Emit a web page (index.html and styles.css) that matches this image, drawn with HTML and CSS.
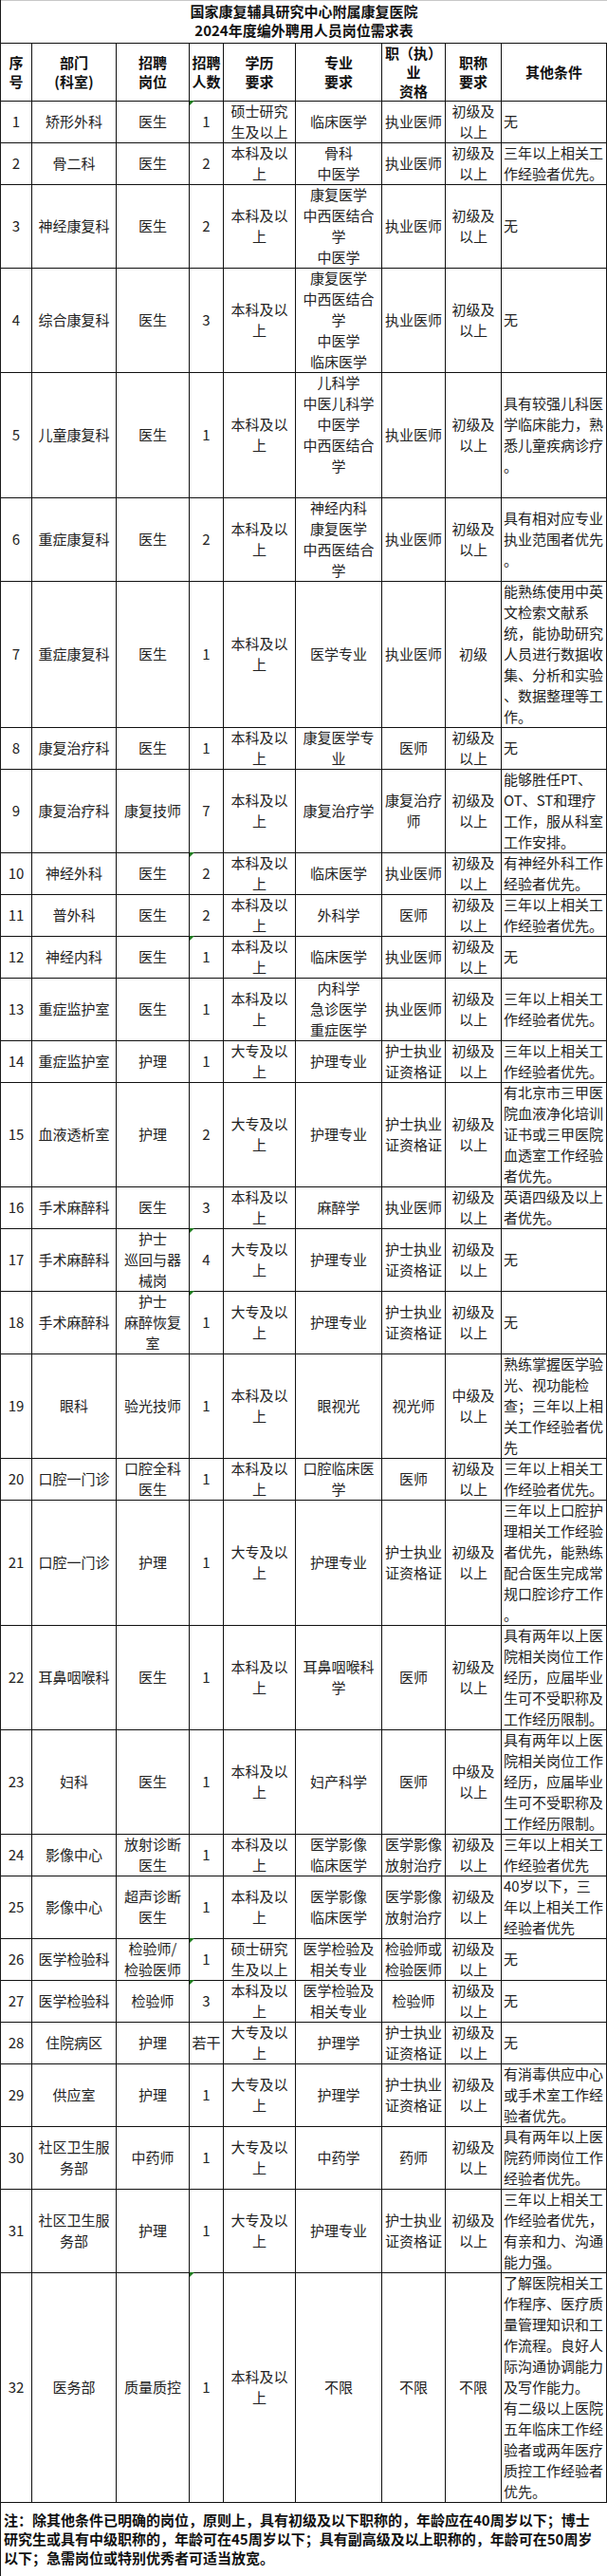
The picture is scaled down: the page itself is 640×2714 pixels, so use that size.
FILE: index.html
```html
<!DOCTYPE html>
<html lang="zh-CN">
<head>
<meta charset="utf-8">
<title>2024年度编外聘用人员岗位需求表</title>
<link rel="stylesheet" href="styles.css">
</head>
<body>
<div class="sheet">
  <div class="title">国家康复辅具研究中心附属康复医院<br>2024年度编外聘用人员岗位需求表</div>

  <div class="row head">
    <div class="c"><span>序<br>号</span></div>
    <div class="c"><span>部门<br>(科室)</span></div>
    <div class="c"><span>招聘<br>岗位</span></div>
    <div class="c"><span>招聘<br>人数</span></div>
    <div class="c"><span>学历<br>要求</span></div>
    <div class="c"><span>专业<br>要求</span></div>
    <div class="c"><span>职（执）<br>业<br>资格</span></div>
    <div class="c"><span>职称<br>要求</span></div>
    <div class="c"><span>其他条件</span></div>
  </div>

  <div class="row r2">
    <div class="c"><span>1</span></div>
    <div class="c"><span>矫形外科</span></div>
    <div class="c"><span>医生</span></div>
    <div class="c tri"><span>1</span></div>
    <div class="c"><span>硕士研究<br>生及以上</span></div>
    <div class="c"><span>临床医学</span></div>
    <div class="c"><span>执业医师</span></div>
    <div class="c"><span>初级及<br>以上</span></div>
    <div class="c o"><span>无</span></div>
  </div>

  <div class="row r2">
    <div class="c"><span>2</span></div>
    <div class="c"><span>骨二科</span></div>
    <div class="c"><span>医生</span></div>
    <div class="c"><span>2</span></div>
    <div class="c"><span>本科及以<br>上</span></div>
    <div class="c"><span>骨科<br>中医学</span></div>
    <div class="c"><span>执业医师</span></div>
    <div class="c"><span>初级及<br>以上</span></div>
    <div class="c o"><span>三年以上相关工<br>作经验者优先。</span></div>
  </div>

  <div class="row r4">
    <div class="c"><span>3</span></div>
    <div class="c"><span>神经康复科</span></div>
    <div class="c"><span>医生</span></div>
    <div class="c"><span>2</span></div>
    <div class="c"><span>本科及以<br>上</span></div>
    <div class="c"><span>康复医学<br>中西医结合<br>学<br>中医学</span></div>
    <div class="c"><span>执业医师</span></div>
    <div class="c"><span>初级及<br>以上</span></div>
    <div class="c o"><span>无</span></div>
  </div>

  <div class="row r5">
    <div class="c"><span>4</span></div>
    <div class="c"><span>综合康复科</span></div>
    <div class="c"><span>医生</span></div>
    <div class="c"><span>3</span></div>
    <div class="c"><span>本科及以<br>上</span></div>
    <div class="c"><span>康复医学<br>中西医结合<br>学<br>中医学<br>临床医学</span></div>
    <div class="c"><span>执业医师</span></div>
    <div class="c"><span>初级及<br>以上</span></div>
    <div class="c o"><span>无</span></div>
  </div>

  <div class="row r6">
    <div class="c"><span>5</span></div>
    <div class="c"><span>儿童康复科</span></div>
    <div class="c"><span>医生</span></div>
    <div class="c"><span>1</span></div>
    <div class="c"><span>本科及以<br>上</span></div>
    <div class="c"><span>儿科学<br>中医儿科学<br>中医学<br>中西医结合<br>学<br>&nbsp;</span></div>
    <div class="c"><span>执业医师</span></div>
    <div class="c"><span>初级及<br>以上</span></div>
    <div class="c o"><span>具有较强儿科医<br>学临床能力，熟<br>悉儿童疾病诊疗<br>。</span></div>
  </div>

  <div class="row r4">
    <div class="c"><span>6</span></div>
    <div class="c"><span>重症康复科</span></div>
    <div class="c"><span>医生</span></div>
    <div class="c"><span>2</span></div>
    <div class="c"><span>本科及以<br>上</span></div>
    <div class="c"><span>神经内科<br>康复医学<br>中西医结合<br>学</span></div>
    <div class="c"><span>执业医师</span></div>
    <div class="c"><span>初级及<br>以上</span></div>
    <div class="c o"><span>具有相对应专业<br>执业范围者优先<br>。</span></div>
  </div>

  <div class="row r7">
    <div class="c"><span>7</span></div>
    <div class="c"><span>重症康复科</span></div>
    <div class="c"><span>医生</span></div>
    <div class="c"><span>1</span></div>
    <div class="c"><span>本科及以<br>上</span></div>
    <div class="c"><span>医学专业</span></div>
    <div class="c"><span>执业医师</span></div>
    <div class="c"><span>初级</span></div>
    <div class="c o"><span>能熟练使用中英<br>文检索文献系<br>统，能协助研究<br>人员进行数据收<br>集、分析和实验<br>、数据整理等工<br>作。</span></div>
  </div>

  <div class="row r2">
    <div class="c"><span>8</span></div>
    <div class="c"><span>康复治疗科</span></div>
    <div class="c"><span>医生</span></div>
    <div class="c"><span>1</span></div>
    <div class="c"><span>本科及以<br>上</span></div>
    <div class="c"><span>康复医学专<br>业</span></div>
    <div class="c"><span>医师</span></div>
    <div class="c"><span>初级及<br>以上</span></div>
    <div class="c o"><span>无</span></div>
  </div>

  <div class="row r4">
    <div class="c"><span>9</span></div>
    <div class="c"><span>康复治疗科</span></div>
    <div class="c"><span>康复技师</span></div>
    <div class="c"><span>7</span></div>
    <div class="c"><span>本科及以<br>上</span></div>
    <div class="c"><span>康复治疗学</span></div>
    <div class="c"><span>康复治疗<br>师</span></div>
    <div class="c"><span>初级及<br>以上</span></div>
    <div class="c o"><span>能够胜任PT、<br>OT、ST和理疗<br>工作，服从科室<br>工作安排。</span></div>
  </div>

  <div class="row r2">
    <div class="c"><span>10</span></div>
    <div class="c"><span>神经外科</span></div>
    <div class="c"><span>医生</span></div>
    <div class="c tri"><span>2</span></div>
    <div class="c"><span>本科及以<br>上</span></div>
    <div class="c"><span>临床医学</span></div>
    <div class="c"><span>执业医师</span></div>
    <div class="c"><span>初级及<br>以上</span></div>
    <div class="c o"><span>有神经外科工作<br>经验者优先。</span></div>
  </div>

  <div class="row r2">
    <div class="c"><span>11</span></div>
    <div class="c"><span>普外科</span></div>
    <div class="c"><span>医生</span></div>
    <div class="c"><span>2</span></div>
    <div class="c"><span>本科及以<br>上</span></div>
    <div class="c"><span>外科学</span></div>
    <div class="c"><span>医师</span></div>
    <div class="c"><span>初级及<br>以上</span></div>
    <div class="c o"><span>三年以上相关工<br>作经验者优先。</span></div>
  </div>

  <div class="row r2">
    <div class="c"><span>12</span></div>
    <div class="c"><span>神经内科</span></div>
    <div class="c"><span>医生</span></div>
    <div class="c tri"><span>1</span></div>
    <div class="c"><span>本科及以<br>上</span></div>
    <div class="c"><span>临床医学</span></div>
    <div class="c"><span>执业医师</span></div>
    <div class="c"><span>初级及<br>以上</span></div>
    <div class="c o"><span>无</span></div>
  </div>

  <div class="row r3">
    <div class="c"><span>13</span></div>
    <div class="c"><span>重症监护室</span></div>
    <div class="c"><span>医生</span></div>
    <div class="c"><span>1</span></div>
    <div class="c"><span>本科及以<br>上</span></div>
    <div class="c"><span>内科学<br>急诊医学<br>重症医学</span></div>
    <div class="c"><span>执业医师</span></div>
    <div class="c"><span>初级及<br>以上</span></div>
    <div class="c o"><span>三年以上相关工<br>作经验者优先。</span></div>
  </div>

  <div class="row r2">
    <div class="c"><span>14</span></div>
    <div class="c"><span>重症监护室</span></div>
    <div class="c"><span>护理</span></div>
    <div class="c"><span>1</span></div>
    <div class="c"><span>大专及以<br>上</span></div>
    <div class="c"><span>护理专业</span></div>
    <div class="c"><span>护士执业<br>证资格证</span></div>
    <div class="c"><span>初级及<br>以上</span></div>
    <div class="c o"><span>三年以上相关工<br>作经验者优先。</span></div>
  </div>

  <div class="row r5">
    <div class="c"><span>15</span></div>
    <div class="c"><span>血液透析室</span></div>
    <div class="c"><span>护理</span></div>
    <div class="c"><span>2</span></div>
    <div class="c"><span>大专及以<br>上</span></div>
    <div class="c"><span>护理专业</span></div>
    <div class="c"><span>护士执业<br>证资格证</span></div>
    <div class="c"><span>初级及<br>以上</span></div>
    <div class="c o"><span>有北京市三甲医<br>院血液净化培训<br>证书或三甲医院<br>血透室工作经验<br>者优先。</span></div>
  </div>

  <div class="row r2">
    <div class="c"><span>16</span></div>
    <div class="c"><span>手术麻醉科</span></div>
    <div class="c"><span>医生</span></div>
    <div class="c"><span>3</span></div>
    <div class="c"><span>本科及以<br>上</span></div>
    <div class="c"><span>麻醉学</span></div>
    <div class="c"><span>执业医师</span></div>
    <div class="c"><span>初级及<br>以上</span></div>
    <div class="c o"><span>英语四级及以上<br>者优先。</span></div>
  </div>

  <div class="row r3">
    <div class="c"><span>17</span></div>
    <div class="c"><span>手术麻醉科</span></div>
    <div class="c"><span>护士<br>巡回与器<br>械岗</span></div>
    <div class="c tri"><span>4</span></div>
    <div class="c"><span>大专及以<br>上</span></div>
    <div class="c"><span>护理专业</span></div>
    <div class="c"><span>护士执业<br>证资格证</span></div>
    <div class="c"><span>初级及<br>以上</span></div>
    <div class="c o"><span>无</span></div>
  </div>

  <div class="row r3">
    <div class="c"><span>18</span></div>
    <div class="c"><span>手术麻醉科</span></div>
    <div class="c"><span>护士<br>麻醉恢复<br>室</span></div>
    <div class="c tri"><span>1</span></div>
    <div class="c"><span>大专及以<br>上</span></div>
    <div class="c"><span>护理专业</span></div>
    <div class="c"><span>护士执业<br>证资格证</span></div>
    <div class="c"><span>初级及<br>以上</span></div>
    <div class="c o"><span>无</span></div>
  </div>

  <div class="row r5">
    <div class="c"><span>19</span></div>
    <div class="c"><span>眼科</span></div>
    <div class="c"><span>验光技师</span></div>
    <div class="c"><span>1</span></div>
    <div class="c"><span>本科及以<br>上</span></div>
    <div class="c"><span>眼视光</span></div>
    <div class="c"><span>视光师</span></div>
    <div class="c"><span>中级及<br>以上</span></div>
    <div class="c o"><span>熟练掌握医学验<br>光、视功能检<br>查；三年以上相<br>关工作经验者优<br>先</span></div>
  </div>

  <div class="row r2">
    <div class="c"><span>20</span></div>
    <div class="c"><span>口腔一门诊</span></div>
    <div class="c"><span>口腔全科<br>医生</span></div>
    <div class="c"><span>1</span></div>
    <div class="c"><span>本科及以<br>上</span></div>
    <div class="c"><span>口腔临床医<br>学</span></div>
    <div class="c"><span>医师</span></div>
    <div class="c"><span>初级及<br>以上</span></div>
    <div class="c o"><span>三年以上相关工<br>作经验者优先。</span></div>
  </div>

  <div class="row r6">
    <div class="c"><span>21</span></div>
    <div class="c"><span>口腔一门诊</span></div>
    <div class="c"><span>护理</span></div>
    <div class="c"><span>1</span></div>
    <div class="c"><span>大专及以<br>上</span></div>
    <div class="c"><span>护理专业</span></div>
    <div class="c"><span>护士执业<br>证资格证</span></div>
    <div class="c"><span>初级及<br>以上</span></div>
    <div class="c o"><span>三年以上口腔护<br>理相关工作经验<br>者优先，能熟练<br>配合医生完成常<br>规口腔诊疗工作<br>。</span></div>
  </div>

  <div class="row r5">
    <div class="c"><span>22</span></div>
    <div class="c"><span>耳鼻咽喉科</span></div>
    <div class="c"><span>医生</span></div>
    <div class="c"><span>1</span></div>
    <div class="c"><span>本科及以<br>上</span></div>
    <div class="c"><span>耳鼻咽喉科<br>学</span></div>
    <div class="c"><span>医师</span></div>
    <div class="c"><span>初级及<br>以上</span></div>
    <div class="c o"><span>具有两年以上医<br>院相关岗位工作<br>经历，应届毕业<br>生可不受职称及<br>工作经历限制。</span></div>
  </div>

  <div class="row r5">
    <div class="c"><span>23</span></div>
    <div class="c"><span>妇科</span></div>
    <div class="c"><span>医生</span></div>
    <div class="c"><span>1</span></div>
    <div class="c"><span>本科及以<br>上</span></div>
    <div class="c"><span>妇产科学</span></div>
    <div class="c"><span>医师</span></div>
    <div class="c"><span>中级及<br>以上</span></div>
    <div class="c o"><span>具有两年以上医<br>院相关岗位工作<br>经历，应届毕业<br>生可不受职称及<br>工作经历限制。</span></div>
  </div>

  <div class="row r2">
    <div class="c"><span>24</span></div>
    <div class="c"><span>影像中心</span></div>
    <div class="c"><span>放射诊断<br>医生</span></div>
    <div class="c"><span>1</span></div>
    <div class="c"><span>本科及以<br>上</span></div>
    <div class="c"><span>医学影像<br>临床医学</span></div>
    <div class="c"><span>医学影像<br>放射治疗</span></div>
    <div class="c"><span>初级及<br>以上</span></div>
    <div class="c o"><span>三年以上相关工<br>作经验者优先</span></div>
  </div>

  <div class="row r3">
    <div class="c"><span>25</span></div>
    <div class="c"><span>影像中心</span></div>
    <div class="c"><span>超声诊断<br>医生</span></div>
    <div class="c"><span>1</span></div>
    <div class="c"><span>本科及以<br>上</span></div>
    <div class="c"><span>医学影像<br>临床医学</span></div>
    <div class="c"><span>医学影像<br>放射治疗</span></div>
    <div class="c"><span>初级及<br>以上</span></div>
    <div class="c o"><span>40岁以下，三<br>年以上相关工作<br>经验者优先</span></div>
  </div>

  <div class="row r2">
    <div class="c"><span>26</span></div>
    <div class="c"><span>医学检验科</span></div>
    <div class="c"><span>检验师/<br>检验医师</span></div>
    <div class="c tri"><span>1</span></div>
    <div class="c"><span>硕士研究<br>生及以上</span></div>
    <div class="c"><span>医学检验及<br>相关专业</span></div>
    <div class="c"><span>检验师或<br>检验医师</span></div>
    <div class="c"><span>初级及<br>以上</span></div>
    <div class="c o"><span>无</span></div>
  </div>

  <div class="row r2">
    <div class="c"><span>27</span></div>
    <div class="c"><span>医学检验科</span></div>
    <div class="c"><span>检验师</span></div>
    <div class="c tri"><span>3</span></div>
    <div class="c"><span>本科及以<br>上</span></div>
    <div class="c"><span>医学检验及<br>相关专业</span></div>
    <div class="c"><span>检验师</span></div>
    <div class="c"><span>初级及<br>以上</span></div>
    <div class="c o"><span>无</span></div>
  </div>

  <div class="row r2">
    <div class="c"><span>28</span></div>
    <div class="c"><span>住院病区</span></div>
    <div class="c"><span>护理</span></div>
    <div class="c"><span>若干</span></div>
    <div class="c"><span>大专及以<br>上</span></div>
    <div class="c"><span>护理学</span></div>
    <div class="c"><span>护士执业<br>证资格证</span></div>
    <div class="c"><span>初级及<br>以上</span></div>
    <div class="c o"><span>无</span></div>
  </div>

  <div class="row r3">
    <div class="c"><span>29</span></div>
    <div class="c"><span>供应室</span></div>
    <div class="c"><span>护理</span></div>
    <div class="c"><span>1</span></div>
    <div class="c"><span>大专及以<br>上</span></div>
    <div class="c"><span>护理学</span></div>
    <div class="c"><span>护士执业<br>证资格证</span></div>
    <div class="c"><span>初级及<br>以上</span></div>
    <div class="c o"><span>有消毒供应中心<br>或手术室工作经<br>验者优先。</span></div>
  </div>

  <div class="row r3">
    <div class="c"><span>30</span></div>
    <div class="c"><span>社区卫生服<br>务部</span></div>
    <div class="c"><span>中药师</span></div>
    <div class="c"><span>1</span></div>
    <div class="c"><span>大专及以<br>上</span></div>
    <div class="c"><span>中药学</span></div>
    <div class="c"><span>药师</span></div>
    <div class="c"><span>初级及<br>以上</span></div>
    <div class="c o"><span>具有两年以上医<br>院药师岗位工作<br>经验者优先。</span></div>
  </div>

  <div class="row r4">
    <div class="c"><span>31</span></div>
    <div class="c"><span>社区卫生服<br>务部</span></div>
    <div class="c"><span>护理</span></div>
    <div class="c"><span>1</span></div>
    <div class="c"><span>大专及以<br>上</span></div>
    <div class="c"><span>护理专业</span></div>
    <div class="c"><span>护士执业<br>证资格证</span></div>
    <div class="c"><span>初级及<br>以上</span></div>
    <div class="c o"><span>三年以上相关工<br>作经验者优先，<br>有亲和力、沟通<br>能力强。</span></div>
  </div>

  <div class="row r11">
    <div class="c"><span>32</span></div>
    <div class="c"><span>医务部</span></div>
    <div class="c"><span>质量质控</span></div>
    <div class="c tri"><span>1</span></div>
    <div class="c"><span>本科及以<br>上</span></div>
    <div class="c"><span>不限</span></div>
    <div class="c"><span>不限</span></div>
    <div class="c"><span>不限</span></div>
    <div class="c o"><span>了解医院相关工<br>作程序、医疗质<br>量管理知识和工<br>作流程。良好人<br>际沟通协调能力<br>及写作能力。<br>有二级以上医院<br>五年临床工作经<br>验者或两年医疗<br>质控工作经验者<br>优先。</span></div>
  </div>

  <div class="note">注：除其他条件已明确的岗位，原则上，具有初级及以下职称的，年龄应在40周岁以下；博士<br>研究生或具有中级职称的，年龄可在45周岁以下；具有副高级及以上职称的，年龄可在50周岁<br>以下；急需岗位或特别优秀者可适当放宽。</div>
</div>
</body>
</html>
```

FILE: styles.css
```css
html, body {
  margin: 0;
  padding: 0;
  background: #ffffff;
}

body {
  font-family: "Noto Sans CJK SC", "Noto Sans", "Liberation Sans", sans-serif;
  color: #222222;
  font-size: 15px;
}

.sheet {
  width: 640px;
  box-sizing: border-box;
  border-left: 1px solid #1a1a1a;
}

.title {
  height: 46px;
  box-sizing: border-box;
  border-top: 1px solid #c8c8c8;
  border-bottom: 1px solid #111111;
  padding-top: 1px;
  text-align: center;
  font-weight: bold;
  font-size: 15px;
  line-height: 20px;
  color: #111111;
}

.row {
  display: grid;
  grid-template-columns: 33px 89px 77px 36px 76px 91px 67px 59px 111px;
}

.c {
  box-sizing: border-box;
  border-right: 1px solid #111111;
  border-bottom: 1px solid #111111;
  display: flex;
  align-items: center;
  justify-content: center;
  text-align: center;
  white-space: nowrap;
  line-height: 22px;
  font-size: 15px;
}

.c > span {
  display: block;
}

.c.o {
  justify-content: flex-start;
  text-align: left;
  padding-left: 2px;
}

.head {
  height: 60px;
}

.head .c {
  font-weight: bold;
  line-height: 20px;
  color: #111111;
}

.r2 { height: 44px; }
.r3 { height: 66px; }
.r4 { height: 88px; }
.r5 { height: 110px; }
.r6 { height: 132px; }
.r7 { height: 154px; }
.r11 { height: 242px; }

.tri {
  position: relative;
}

.tri::before {
  content: "";
  position: absolute;
  left: 0;
  top: 0;
  width: 0;
  height: 0;
  border-top: 5px solid #1e7a1e;
  border-right: 5px solid transparent;
}

.note {
  font-weight: bold;
  font-size: 15px;
  line-height: 20px;
  padding: 9px 0 9px 3px;
  white-space: nowrap;
  color: #111111;
  height: 78px;
  box-sizing: border-box;
}
```
